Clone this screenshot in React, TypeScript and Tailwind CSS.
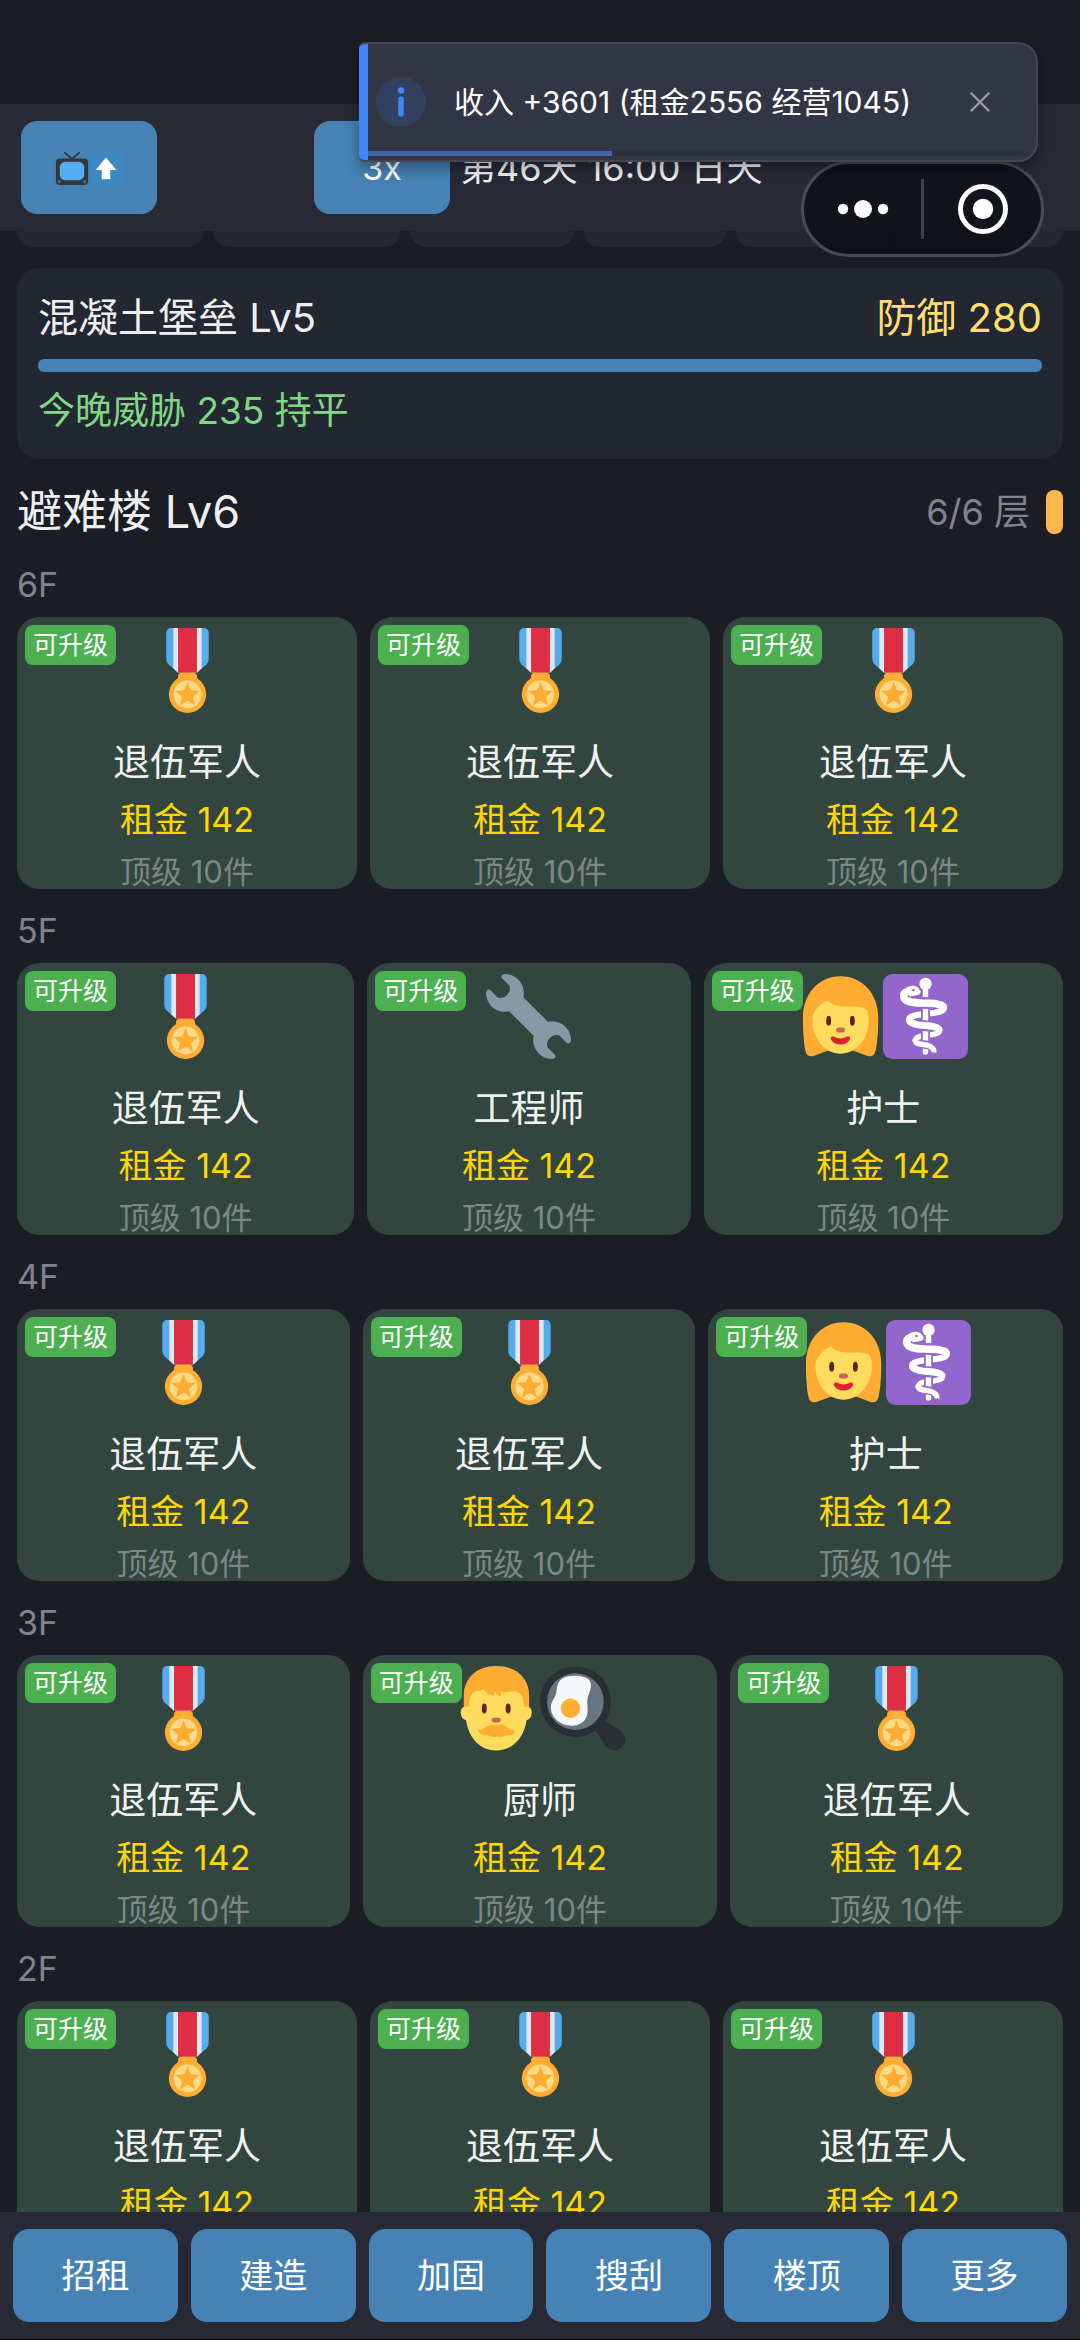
import type { ReactNode } from "react";

type Role = "veteran" | "engineer" | "nurse" | "chef";

function Emoji({ children, small }: { children: ReactNode; small?: boolean }) {
  return (
    <svg
      viewBox="0 0 36 36"
      aria-hidden="true"
      className={small ? "size-[34px] shrink-0" : "size-[85px] shrink-0"}
    >
      {children}
    </svg>
  );
}

function Medal() {
  return (
    <Emoji>
      <path fill="#55ACEE" d="M11 0h14a2 2 0 0 1 2 2v11c0 1.200-.6 2.200-1.500 2.900L22 19h-8l-3.500-3.100C9.600 15.200 9 14.200 9 13V2a2 2 0 0 1 2-2z" />
      <path fill="#E1E8ED" d="M12 0h12v17l-2 2h-8l-2-2z" />
      <path fill="#DD2E44" d="M14 0h8v19h-8z" />
      <path fill="#FFAC33" d="M14 21.500V20.500a1.500 1.500 0 0 1 1.500-1.500h5a1.500 1.500 0 0 1 1.500 1.500v1z" />
      <circle cx="18" cy="28.100" r="7.900" fill="#FFAC33" />
      <circle cx="18" cy="28.100" r="5.900" fill="#FFD983" />
      <path fill="#FFAC33" d="M18 22.900l1.400 3.500 3.800.3-2.900 2.400.9 3.700L18 30.800l-3.200 2 .9-3.700-2.900-2.400 3.800-.3z" />
    </Emoji>
  );
}

function Wrench() {
  return (
    <Emoji>
      <path
        fill="#8899A6"
        d="M27.989 19.977c-.622 0-1.225.078-1.806.213L15.811 9.818c.134-.581.212-1.184.212-1.806C16.023 3.587 12.436 0 8.012 0 7.110 0 5.910.916 6.909 1.915l2.997 2.997s.999 1.998-.999 3.995-3.996.998-3.996.998L1.915 6.909C.916 5.910 0 7.105 0 8.012c0 4.425 3.587 8.012 8.012 8.012.622 0 1.225-.078 1.806-.212l10.371 10.371c-.135.581-.213 1.184-.213 1.806 0 4.425 3.588 8.011 8.012 8.011.901 0 2.101-.916 1.102-1.915l-2.997-2.997s-.999-1.998.999-3.995 3.995-.999 3.995-.999l2.997 2.997c1 .999 1.916-.196 1.916-1.102 0-4.425-3.587-8.012-8.011-8.012z"
      />
    </Emoji>
  );
}

function Woman() {
  return (
    <Emoji>
      <path fill="#FFAC33" d="M18 .9C8.600.9 2.100 8.500 2.100 18.500c0 5.500.3 10.700 1.100 14.200.5 1.900 1.600 2.500 3.600 1.900L12.500 32.500h11l5.700 2.100c2 .6 3.100 0 3.600-1.900.9-3.500 1.200-8.700 1.200-14.200C34 8.500 27.400.9 18 .9z" />
      <path fill="#FFDC5D" d="M12.600 11.100c1.400 1.600 3.200 2.400 6 2.600 3.600.3 6.900-.3 9.400.7 1.800.8 2 2.700 2 4.900C30 27.800 24.300 33.800 18 33.800S6.100 27.800 6.100 19.300c0-2.600 1.900-5.900 6.500-8.200z" />
      <ellipse cx="13" cy="19.800" rx="1.050" ry="2.100" fill="#662113" />
      <ellipse cx="23" cy="19.800" rx="1.050" ry="2.100" fill="#662113" />
      <rect x="16.100" y="22.700" width="3.800" height="2.100" rx="1" fill="#C1694F" />
      <path fill="#DF1F32" d="M15.400 26.600c1.600.9 3.600.9 5.200 0 .9-.5 1.900.3 1.300 1.300-1.600 2.600-6.200 2.600-7.800 0-.6-1 .4-1.800 1.300-1.300z" />
    </Emoji>
  );
}

function Staff() {
  return (
    <Emoji>
      <rect width="36" height="36" rx="4" fill="#9266CC" />
      <g fill="none" stroke="#FFF" strokeLinecap="round" strokeLinejoin="round">
        <path strokeWidth="2.600" d="M24.800 12.900c1.700 1 1.300 2.500-.9 3.100-3.400 1-9 .6-11.900 2.100-1.200.7-1.300 1.600-.5 2.400" />
        <path strokeWidth="2.300" d="M23 22.700c1.500.8 1.200 2.200-.8 2.700-2.500.7-5.700.5-7.700 1.500-1.100.7-1 1.500-.2 2.200" />
      </g>
      <path stroke="#9266CC" strokeWidth="3.800" d="M18 14v15" />
      <circle cx="18" cy="4.200" r="2.600" fill="#FFF" />
      <path stroke="#FFF" strokeWidth="2.300" strokeLinecap="round" d="M18 5v28" />
      <path stroke="#9266CC" strokeWidth="5" d="M16.500 12.200l3 .1" />
      <path stroke="#9266CC" strokeWidth="4.600" d="M16.500 21.800l3 .3" />
      <path stroke="#9266CC" strokeWidth="3.600" d="M16.500 29.700l3 .5" />
      <g fill="none" stroke="#FFF" strokeLinecap="round" strokeLinejoin="round">
        <path strokeWidth="3.200" d="M12.200 7.200C9.800 7 8.500 8.200 8.800 9.700c.5 2.200 3.800 2.500 7.700 2.600 3.600 0 7.400 0 8.600 1.600" />
        <path strokeWidth="2.900" d="M11.500 19.400c.2 1.900 3.400 2.200 6.500 2.400 2.500.2 5 .4 5.700 1.600" />
        <path strokeWidth="2.300" d="M13.600 28.200c.3 1.400 2.500 1.500 4.500 1.800 1.700.3 2.900 1 3.300 2.100" />
      </g>
      <path fill="#FFF" d="M9.500 6c1.400-1.300 3.900-1.400 5.200-.4l1.200 1.500c.3.800-.4 1.600-1.300 1.800l-3.200.6zM20 31l2.400.8c.3.700.3 1.300.1 1.900z" />
      <circle cx="12.900" cy="6.800" r=".55" fill="#9266CC" />
    </Emoji>
  );
}

function Man() {
  return (
    <Emoji>
      <path fill="#FFAC33" d="M17.500 0C9 0 3.700 5.300 3.700 12.500V18h27.700v-5.500C31.400 5.300 26 0 17.500 0z" />
      <path fill="#FFDC5D" d="M6 17.200c0-2.300.2-4.400 1.300-5.600 1.400-1.500 2.700-.6 4.700-1.900.8 1.400 2.200 2.300 4.400 3 .2-.9.200-1.400.1-2.300.8 1.200 1.700 2 3.100 2.600 0-.9-.2-1.500-.6-2.200 2.700.5 4.900-.3 7 .2 2.400.6 3.100 2.900 3.300 6.200h1.300c1.400.300 2 1.400 1.900 2.700-.1 1.500-.8 2.700-2.200 3.100C29.100 31 24 35.800 17.500 35.800S5.900 31 4.700 23c-1.400-.4-2.200-1.600-2.300-3.100-.1-1.300.5-2.400 1.900-2.700z" />
      <ellipse cx="12.400" cy="18" rx="1.050" ry="2.100" fill="#662113" />
      <ellipse cx="22.500" cy="18" rx="1.050" ry="2.100" fill="#662113" />
      <rect x="15.500" y="21.900" width="3.900" height="2" rx="1" fill="#C1694F" />
      <path fill="#FFAC33" d="M17.500 25.200c2.300-1 4.200.2 5.200 1.200.8.700 1.600.7 2.400.5.500.9 0 2.200-1.600 2.400-.5.100-1 0-1.500-.1-.4.600-1 .7-1.600.5-.5.500-1.200.5-1.600 0-.4.400-.9.400-1.300 0-.5.500-1.200.5-1.700 0-.5.300-1.300.2-1.600-.5-.5.200-1.200.3-1.800.1-1.500-.2-2.800-1-2.700-2.400.9.200 1.700.1 2.600-.5 1.200-.9 3.100-2.100 5.200-1.200z" />
    </Emoji>
  );
}

function Pan() {
  return (
    <Emoji>
      <path fill="#292F33" d="M23 27l4.300-4.200c2.500 2.300 5.500 3.300 7.300 5.300 1.800 2.100 1.800 4.500.2 6.200-1.700 1.800-4.400 2.100-6.300.2-2-1.900-3-5.200-5.500-7.500z" />
      <circle cx="15" cy="15.100" r="15" fill="#292F33" />
      <circle cx="15" cy="15.100" r="12" fill="#66757F" />
      <path fill="#F5F8FA" d="M9.800 5.100c2.300-1.300 6.600-1.300 9.500-.2 1.800.7 2.600 2.400 2.200 4.300-.4 2.200-1.500 3.700-1.500 5.800 0 1.700.3 3 .1 5-.4 3.300-3.200 5.300-6.700 5.300-4.800 0-8.800-3.400-8.800-7.700 0-2.800 1.900-4 2.300-6.300.3-2.300.4-4.800 2.900-6.200z" />
      <circle cx="12.900" cy="17.900" r="4.100" fill="#FFAC33" />
    </Emoji>
  );
}

function Television() {
  return (
    <Emoji small>
      <path fill="none" stroke="#31373D" strokeWidth="2" strokeLinecap="round" d="M10.500 2L18 8.500 25.500 2" />
      <rect x="1" y="8" width="34" height="28" rx="4" fill="#31373D" />
      <rect x="5" y="11.500" width="26" height="19.500" rx="6" fill="#55ACEE" />
      <circle cx="4.500" cy="32.500" r="1.500" fill="#66757F" />
      <circle cx="31.500" cy="32.500" r="1.500" fill="#66757F" />
    </Emoji>
  );
}

function ArrowUp() {
  return (
    <Emoji small>
      <rect width="36" height="36" rx="4" fill="#3B88C3" />
      <path fill="#FFF" d="M18 7l11 13h-6.500v10h-9V20H7z" />
    </Emoji>
  );
}

const roles: Record<Role, { name: string; icon: ReactNode }> = {
  veteran: { name: "退伍军人", icon: <Medal /> },
  engineer: { name: "工程师", icon: <Wrench /> },
  nurse: {
    name: "护士",
    icon: (
      <>
        <Woman />
        <Staff />
      </>
    ),
  },
  chef: {
    name: "厨师",
    icon: (
      <>
        <Man />
        <Pan />
      </>
    ),
  },
};

const floors: { label: string; rooms: Role[] }[] = [
  { label: "6F", rooms: ["veteran", "veteran", "veteran"] },
  { label: "5F", rooms: ["veteran", "engineer", "nurse"] },
  { label: "4F", rooms: ["veteran", "veteran", "nurse"] },
  { label: "3F", rooms: ["veteran", "chef", "veteran"] },
  { label: "2F", rooms: ["veteran", "veteran", "veteran"] },
];

const actions = ["招租", "建造", "加固", "搜刮", "楼顶", "更多"];

function Room({ role }: { role: Role }) {
  const { name, icon } = roles[role];
  return (
    <button
      type="button"
      className="relative flex h-[272px] flex-auto flex-col items-center overflow-hidden rounded-[22px] bg-[#32453f] pt-[11px] whitespace-nowrap"
    >
      <span className="absolute top-2 left-2 rounded-lg bg-[#4caf50] px-2 text-[25px] leading-10 text-white">
        可升级
      </span>
      <span className="relative flex">{icon}</span>
      <span className="mt-[23px] text-[37px] leading-[54px] text-[#f0f2f1]">{name}</span>
      <span className="mt-[5px] text-[34px] leading-[50px] text-[#ffd700]">租金 142</span>
      <span className="mt-1 text-[31px] leading-[46px] text-[#7b8886]">顶级 10件</span>
    </button>
  );
}

function Toast() {
  return (
    <div
      role="status"
      className="absolute top-[42px] right-[42px] left-[359px] z-20 flex h-[120px] items-center overflow-hidden rounded-l-md rounded-r-[20px] border-2 border-l-0 border-[#434652] bg-[#323644] shadow-[0_6px_14px_rgba(0,0,0,0.35)]"
    >
      <span className="w-[9px] self-stretch bg-[#4285f4]" />
      <span className="ml-2 flex size-[50px] items-center justify-center rounded-full bg-[#32405f]">
        <svg viewBox="0 0 10 30" className="h-[30px] w-[10px]" fill="#4285f4" aria-hidden="true">
          <circle cx="5" cy="3.500" r="3.200" />
          <rect x="2.200" y="9.500" width="5.600" height="20" rx="2.800" />
        </svg>
      </span>
      <span className="ml-7 flex-1 text-[30px] leading-10 whitespace-nowrap text-white">
        收入 +3601 (租金2556 经营1045)
      </span>
      <button type="button" aria-label="关闭" className="mr-9 p-2.5">
        <svg viewBox="0 0 20 20" className="size-5" stroke="#9a9da6" strokeWidth="2.400" strokeLinecap="round" aria-hidden="true">
          <path d="M1.500 1.500l17 17M18.500 1.500l-17 17" />
        </svg>
      </button>
      <span className="absolute right-2 bottom-1 left-[9px] h-[5px] rounded-r bg-[#2d303d]">
        <span className="block h-full w-[37%] bg-[#4363a8]" />
      </span>
    </div>
  );
}

function Capsule() {
  return (
    <div className="absolute top-[161px] right-9 z-10 flex h-24 w-[243px] items-center rounded-full border-[3px] border-[#4b4c51] bg-[#0d0f14]/80">
      <button type="button" aria-label="菜单" className="flex flex-1 justify-center">
        <svg viewBox="0 0 52 20" className="h-5 w-[52px]" fill="#fff" aria-hidden="true">
          <circle cx="6" cy="10" r="5.200" />
          <circle cx="26" cy="10" r="9" />
          <circle cx="46" cy="10" r="5.200" />
        </svg>
      </button>
      <span className="h-[60px] w-[3px] bg-[#404248]" />
      <button type="button" aria-label="退出" className="flex flex-1 justify-center">
        <svg viewBox="0 0 50 50" className="size-[50px]" aria-hidden="true">
          <circle cx="25" cy="25" r="22.500" fill="none" stroke="#fff" strokeWidth="5" />
          <circle cx="25" cy="25" r="10.200" fill="#fff" />
        </svg>
      </button>
    </div>
  );
}

export default function App() {
  return (
    <div className="relative flex h-screen flex-col overflow-hidden border-b border-black bg-[#1a1d24] font-[Inter,'Noto_Sans_CJK_SC',sans-serif] text-[#eeeff1]">
      <Toast />
      <Capsule />

      <header className="mt-[104px] flex items-center bg-[#272a35] py-[17px] pl-[21px]">
        <button type="button" aria-label="看广告升级" className="flex h-[93px] w-[136px] items-center justify-center rounded-2xl bg-[#4682b4]">
          <Television />
          <ArrowUp />
        </button>
        <button type="button" className="ml-[157px] h-[93px] w-[136px] rounded-2xl bg-[#4682b4] text-[34px] text-white">
          3x
        </button>
        <span className="ml-2.5 text-[36px] leading-[54px] whitespace-nowrap">第46天 16:00 日天</span>
      </header>

      <main className="min-h-0 flex-1 overflow-x-hidden overflow-y-auto px-[17px] [scrollbar-width:none]">
        <div className="flex h-4 gap-[9px]">
          <span className="flex-[186] rounded-b-2xl bg-[#232731]" />
          <span className="flex-[188] rounded-b-2xl bg-[#232731]" />
          <span className="flex-[163] rounded-b-2xl bg-[#232731]" />
          <span className="flex-[143] rounded-b-2xl bg-[#232731]" />
          <span className="flex-[152] rounded-b-2xl bg-[#232731]" />
          <span className="flex-[166] rounded-b-2xl bg-[#232731]" />
        </div>

        <section className="mt-[21px] rounded-[22px] bg-[#232731] px-[21px] pt-[21px] pb-[22px]">
          <div className="flex justify-between text-[40px] leading-[58px]">
            <h2>混凝土堡垒 Lv5</h2>
            <span className="text-[#ffdf6b]">防御 280</span>
          </div>
          <div className="mt-3 h-[13px] rounded-md bg-[#4682b4]" />
          <p className="mt-[13px] text-[37px] leading-[52px] text-[#81d884]">今晚威胁 235 持平</p>
        </section>

        <div className="mt-[21px] flex h-[63px] items-center justify-between">
          <h1 className="text-[45px] leading-[63px]">避难楼 Lv6</h1>
          <div className="flex items-center gap-4 text-[36px] text-[#81848c]">
            <span>6/6 层</span>
            <span className="h-11 w-[17px] rounded-lg bg-[#ffb74d]" />
          </div>
        </div>

        {floors.map((floor) => (
          <section key={floor.label} className="mt-[18px]">
            <h3 className="text-[34px] leading-[48px] text-[#81848c]">{floor.label}</h3>
            <div className="mt-2 flex gap-[13px]">
              {floor.rooms.map((role, i) => (
                <Room key={i} role={role} />
              ))}
            </div>
          </section>
        ))}
      </main>

      <nav className="flex gap-[13px] bg-[#272a35] px-[13px] py-[17px]">
        {actions.map((label) => (
          <button key={label} type="button" className="h-[93px] flex-1 rounded-2xl bg-[#4682b4] text-[34px] text-white">
            {label}
          </button>
        ))}
      </nav>
    </div>
  );
}
